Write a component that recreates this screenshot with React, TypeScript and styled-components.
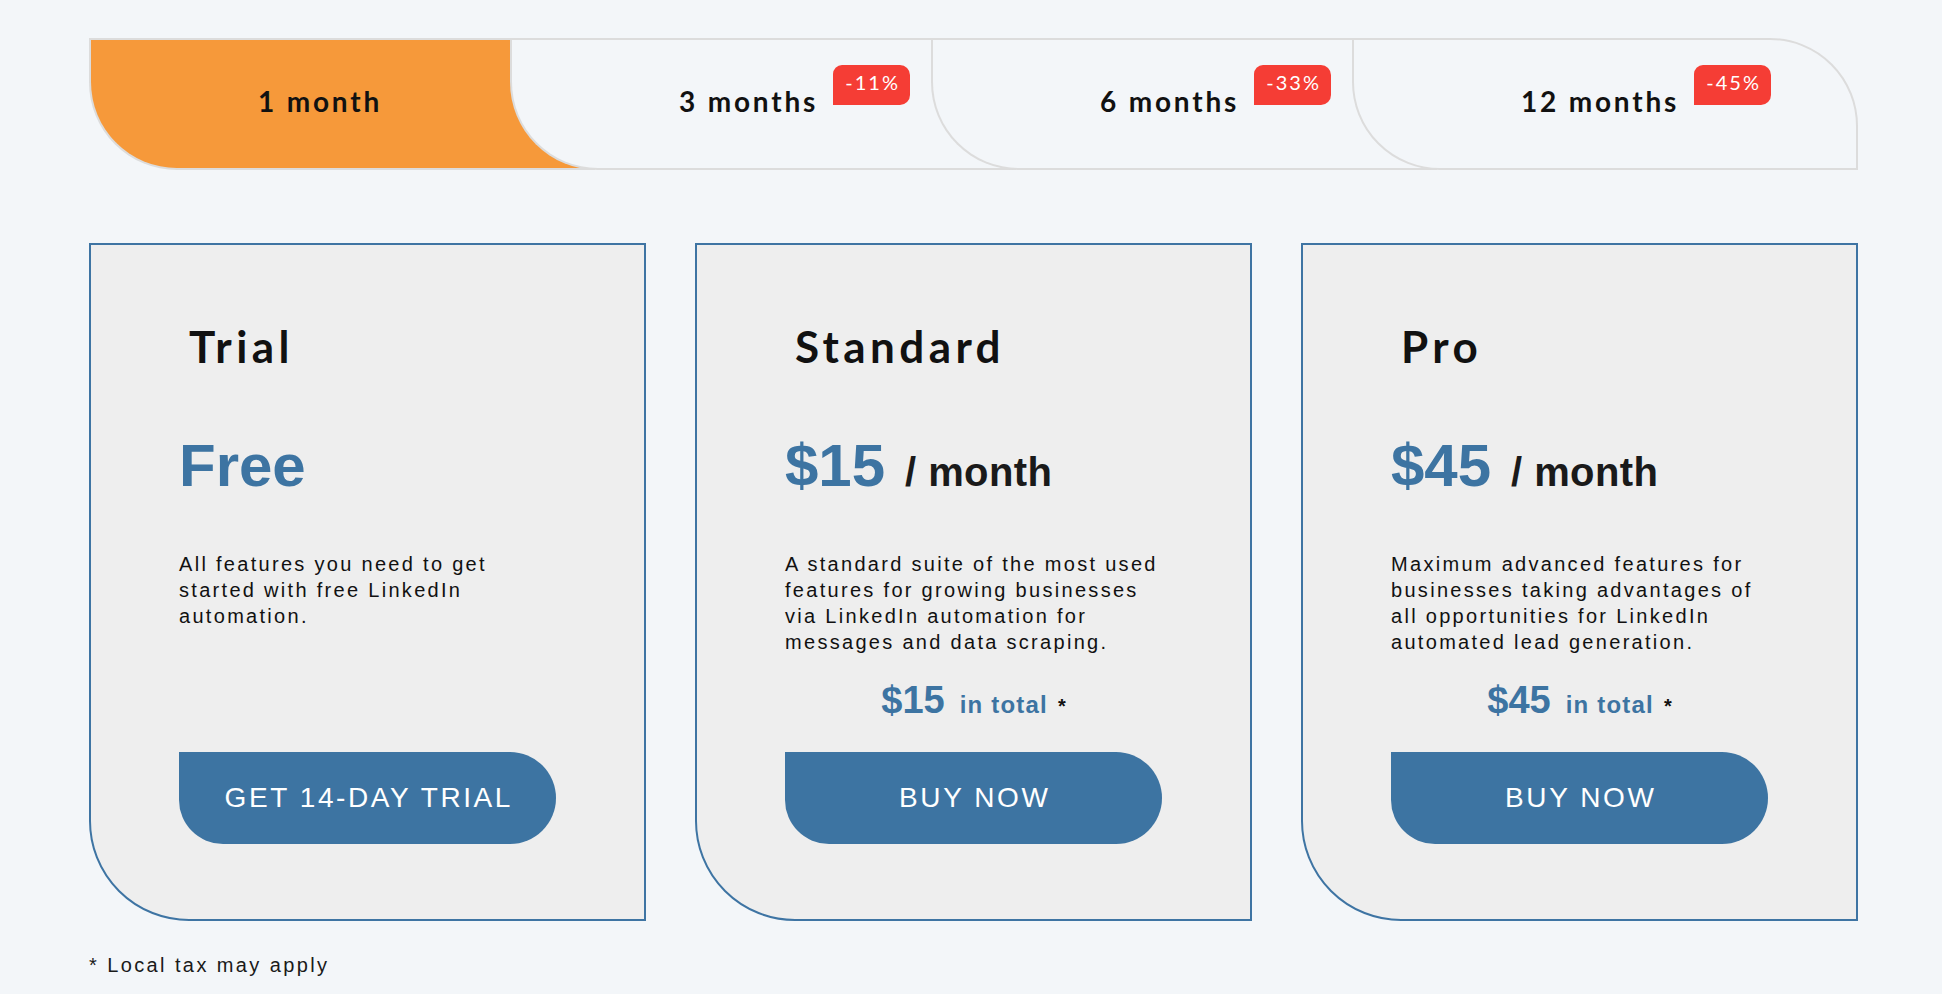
import React from 'react';
import styled, { createGlobalStyle } from 'styled-components';

const GlobalStyle = createGlobalStyle`
  html, body {
    margin: 0;
    padding: 0;
    background: #f3f6f9;
  }
  body {
    font-family: "Liberation Sans", Arial, sans-serif;
  }
`;

const BLUE = '#3d74a2';

const Page = styled.div`
  padding: 38px 0 0 89px;
  width: 1769px;
`;

const TabBar = styled.div`
  display: flex;
`;

const Tab = styled.button<{ $active?: boolean; $first?: boolean; $last?: boolean }>`
  flex: 0 0 506px;
  width: 506px;
  height: 132px;
  box-sizing: border-box;
  margin: 0 0 0 ${(p) => (p.$first ? 0 : -85)}px;
  border: 2px solid #dcdcdc;
  border-right: ${(p) => (p.$last ? '2px solid #dcdcdc' : 'none')};
  border-radius: 0 ${(p) => (p.$last ? '88px' : '0')} 0 88px;
  background: ${(p) => (p.$active ? '#f6993a' : '#f3f6f9')};
  padding: 44px 0 0 167px;
  display: flex;
  align-items: flex-start;
  justify-content: flex-start;
  text-align: left;
  cursor: pointer;
  font: 700 28px/34px Lato, "Open Sans", sans-serif;
  letter-spacing: 2.8px;
  color: #111;
`;

const TabLabel = styled.span`
  position: relative;
  display: inline-block;
`;

const Badge = styled.span`
  position: absolute;
  left: calc(100% + 15px);
  top: -19px;
  width: 77px;
  height: 40px;
  box-sizing: border-box;
  padding: 0 0 5px 2px;
  background: #f53d35;
  color: #fff;
  border-radius: 9px 10px 10px 0;
  font: 400 20px/35px Lato, "Open Sans", sans-serif;
  letter-spacing: 2px;
  text-align: center;
  white-space: nowrap;
`;

const Cards = styled.div`
  display: grid;
  grid-template-columns: repeat(3, 557px);
  column-gap: 49px;
  margin-top: 73px;
`;

const Card = styled.div`
  display: flex;
  flex-direction: column;
  box-sizing: border-box;
  background: #eeeeee;
  border: 2px solid #3e74a3;
  border-radius: 0 0 0 100px;
  padding: 0 88px 75px;
`;

const Title = styled.h2`
  margin: 75px 0 0;
  padding-left: 10px;
  font: 700 44px/52px Lato, "Open Sans", sans-serif;
  letter-spacing: 4.4px;
  color: #111;
`;

const PriceRow = styled.div`
  margin-top: 64px;
  display: flex;
  align-items: baseline;
  height: 60px;
`;

const Amount = styled.span`
  font: 700 60px/60px "Liberation Sans", Arial, sans-serif;
  color: ${BLUE};
`;

const Period = styled.span`
  margin-left: 20px;
  font: 700 40px/60px "Liberation Sans", Arial, sans-serif;
  letter-spacing: 0.4px;
  color: #1a1a1a;
`;

const Description = styled.p`
  margin: 55px 0 0;
  width: 386px;
  font: 400 20px/26px "Liberation Sans", Arial, sans-serif;
  letter-spacing: 2.3px;
  color: #111;
`;

const TotalLine = styled.div`
  margin: 23px 0 30px;
  height: 44px;
  display: flex;
  justify-content: center;
  align-items: baseline;
`;

const TotalAmount = styled.span`
  font: 700 38px/44px "Liberation Sans", Arial, sans-serif;
  color: ${BLUE};
`;

const TotalLabel = styled.span`
  margin-left: 15px;
  font: 700 24px/44px "Liberation Sans", Arial, sans-serif;
  letter-spacing: 1.2px;
  color: ${BLUE};
`;

const Asterisk = styled.span`
  margin-left: 10px;
  font: 700 20px/44px "Liberation Sans", Arial, sans-serif;
  color: #111;
`;

const BuyButton = styled.button`
  margin-top: auto;
  width: 377px;
  height: 92px;
  border: none;
  border-radius: 0 46px 46px 44px;
  background: ${BLUE};
  color: #fff;
  padding: 0 0 0 2.6px;
  font: 400 28px/1 "Liberation Sans", Arial, sans-serif;
  letter-spacing: 2.6px;
  cursor: pointer;
`;

const Footnote = styled.p`
  margin: 31px 0 0;
  font: 400 20px/26px "Liberation Sans", Arial, sans-serif;
  letter-spacing: 2.4px;
  color: #1a1a1a;
`;

type BillingPeriod = { label: string; discount?: string };

const periods: BillingPeriod[] = [
  { label: '1 month' },
  { label: '3 months', discount: '-11%' },
  { label: '6 months', discount: '-33%' },
  { label: '12 months', discount: '-45%' },
];

type Plan = {
  name: string;
  price: string;
  perMonth: boolean;
  description: string;
  total?: string;
  cta: string;
};

const plans: Plan[] = [
  {
    name: 'Trial',
    price: 'Free',
    perMonth: false,
    description: 'All features you need to get started with free LinkedIn automation.',
    cta: 'GET 14-DAY TRIAL',
  },
  {
    name: 'Standard',
    price: '$15',
    perMonth: true,
    description:
      'A standard suite of the most used features for growing businesses via LinkedIn automation for messages and data scraping.',
    total: '$15',
    cta: 'BUY NOW',
  },
  {
    name: 'Pro',
    price: '$45',
    perMonth: true,
    description:
      'Maximum advanced features for businesses taking advantages of all opportunities for LinkedIn automated lead generation.',
    total: '$45',
    cta: 'BUY NOW',
  },
];

export default function App() {
  const [active, setActive] = React.useState(0);
  return (
    <>
      <GlobalStyle />
      <Page>
        <TabBar>
          {periods.map((p, i) => (
            <Tab
              key={p.label}
              $active={i === active}
              $first={i === 0}
              $last={i === periods.length - 1}
              onClick={() => setActive(i)}
            >
              <TabLabel>
                {p.label}
                {p.discount && <Badge>{p.discount}</Badge>}
              </TabLabel>
            </Tab>
          ))}
        </TabBar>
        <Cards>
          {plans.map((plan) => (
            <Card key={plan.name}>
              <Title>{plan.name}</Title>
              <PriceRow>
                <Amount>{plan.price}</Amount>
                {plan.perMonth && <Period>/ month</Period>}
              </PriceRow>
              <Description>{plan.description}</Description>
              {plan.total && (
                <TotalLine>
                  <TotalAmount>{plan.total}</TotalAmount>
                  <TotalLabel>in total</TotalLabel>
                  <Asterisk>*</Asterisk>
                </TotalLine>
              )}
              <BuyButton>{plan.cta}</BuyButton>
            </Card>
          ))}
        </Cards>
        <Footnote>* Local tax may apply</Footnote>
      </Page>
    </>
  );
}
